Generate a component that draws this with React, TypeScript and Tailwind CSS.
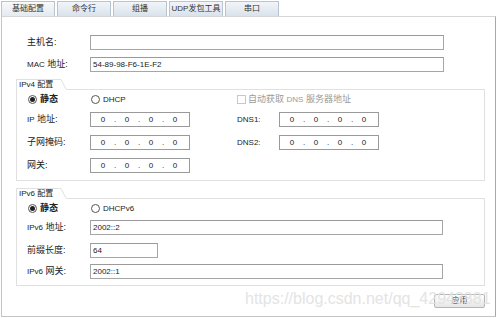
import React from 'react';

const TABS = ['基础配置', '命令行', '组播', 'UDP发包工具', '串口'];

function TextInput({ value = '', w }: { value?: string; w: string }) {
  return (
    <div className={`${w} h-[15px] border border-[#a6a6a6] border-t-[#9a9a9a] bg-white flex items-center pl-[2px] text-[8px] text-[#222]`}>
      {value}
    </div>
  );
}

function IpInput() {
  return (
    <div className="w-[100px] h-[15px] border border-[#9a9a9a] bg-white flex items-center text-[8px] text-[#222]">
      {[0, 1, 2, 3].map((i) => (
        <React.Fragment key={i}>
          {i > 0 && <span className="w-0 flex justify-center">.</span>}
          <span className="w-[24px] text-center">0</span>
        </React.Fragment>
      ))}
    </div>
  );
}

function Radio({ checked, label }: { checked?: boolean; label: string }) {
  return (
    <div className="flex items-center gap-[3px]">
      <span className="w-[9px] h-[9px] rounded-full border border-[#555] bg-white flex items-center justify-center">
        {checked && <span className="w-[5px] h-[5px] rounded-full bg-[#222]" />}
      </span>
      <span className={label.startsWith('DHCP') ? 'text-[8px]' : 'text-[9px] font-semibold'}>{label}</span>
    </div>
  );
}

function GroupTab({ title }: { title: string }) {
  return (
    <div className="flex h-[11px]">
      <div className="border-l border-t border-[#e0e0e0] pl-[2px] pr-[8px] text-[8px] leading-[10px] text-[#222] bg-white">
        {title}
      </div>
      <svg width="6" height="11" className="block">
        <line x1="0" y1="0.5" x2="5.5" y2="11" stroke="#e0e0e0" strokeWidth="1" />
      </svg>
      <div className="flex-1 border-b border-[#e0e0e0]" />
    </div>
  );
}

function Label({ children, w = 'w-[63px]' }: { children: React.ReactNode; w?: string }) {
  return <div className={`${w} text-[9px] text-[#222] shrink-0`}>{children}</div>;
}

export default function App() {
  return (
    <div
      className="w-[496px] h-[318px] bg-white relative overflow-hidden text-[#222]"
      style={{ fontFamily: '"Liberation Sans","Noto Sans CJK SC",sans-serif' }}
    >
      {/* tabs */}
      <div className="flex h-[16px] pl-[1px] gap-[2px] items-end">
        {TABS.map((t, i) => (
          <div
            key={t}
            className={`w-[54px] h-[15px] border border-b-0 border-[#b8c4d0] flex items-center justify-center text-[8px] text-[#333] ${
              i === 0 ? 'bg-gradient-to-b from-[#f7f9fb] to-[#e4eaf0]' : 'bg-gradient-to-b from-[#f1f5f9] to-[#d9e2eb]'
            }`}
          >
            {t}
          </div>
        ))}
      </div>

      {/* panel */}
      <div className="ml-[1px] w-[495px] h-[301px] border border-[#c4c4c4] border-t-[#d6d6d6] border-r-[#a8a8a8] pl-[14px] pr-[10px] pt-[18px]">
        <div className="pl-[11px] flex items-center">
          <Label>主机名:</Label>
          <TextInput w="w-[354px]" />
        </div>
        <div className="pl-[11px] flex items-center mt-[7px]">
          <Label>
            <span className="text-[8px]">MAC</span> 地址:
          </Label>
          <TextInput w="w-[354px]" value="54-89-98-F6-1E-F2" />
        </div>

        {/* IPv4 */}
        <div className="mt-[7px]">
          <GroupTab title="IPv4 配置" />
          <div className="border-l border-r border-b border-[#e0e0e0] pl-[10px] pt-[4px] pb-[7px]">
            <div className="flex items-center h-[11px]">
              <div className="w-[63px] pl-[1px]">
                <Radio checked label="静态" />
              </div>
              <div className="w-[147px] pl-[1px]">
                <Radio label="DHCP" />
              </div>
              <div className="flex items-center gap-[2px] text-[9px] text-[#9a9a9a]">
                <span className="w-[9px] h-[9px] border border-[#c8c8c8] bg-white" />
                <span>
                  自动获取 <span className="text-[8px]">DNS</span> 服务器地址
                </span>
              </div>
            </div>
            <div className="flex items-center mt-[7px]">
              <Label>
                <span className="text-[8px]">IP</span> 地址:
              </Label>
              <IpInput />
              <div className="w-[47px]" />
              <Label w="w-[42px]">
                <span className="text-[8px]">DNS1:</span>
              </Label>
              <IpInput />
            </div>
            <div className="flex items-center mt-[8px]">
              <Label>子网掩码:</Label>
              <IpInput />
              <div className="w-[47px]" />
              <Label w="w-[42px]">
                <span className="text-[8px]">DNS2:</span>
              </Label>
              <IpInput />
            </div>
            <div className="flex items-center mt-[8px]">
              <Label>网关:</Label>
              <IpInput />
            </div>
          </div>
        </div>

        {/* IPv6 */}
        <div className="mt-[7px]">
          <GroupTab title="IPv6 配置" />
          <div className="border-l border-r border-b border-[#e0e0e0] pl-[10px] pt-[4px] pb-[6px]">
            <div className="flex items-center h-[11px]">
              <div className="w-[63px] pl-[1px]">
                <Radio checked label="静态" />
              </div>
              <div className="pl-[1px]">
                <Radio label="DHCPv6" />
              </div>
            </div>
            <div className="flex items-center mt-[6px]">
              <Label>
                <span className="text-[8px]">IPv6</span> 地址:
              </Label>
              <TextInput w="w-[353px]" value="2002::2" />
            </div>
            <div className="flex items-center mt-[8px]">
              <Label>前缀长度:</Label>
              <TextInput w="w-[68px]" value="64" />
            </div>
            <div className="flex items-center mt-[6px]">
              <Label>
                <span className="text-[8px]">IPv6</span> 网关:
              </Label>
              <TextInput w="w-[353px]" value="2002::1" />
            </div>
          </div>
        </div>

        <div className="flex justify-end mt-[8px]">
          <div className="w-[51px] h-[14px] border border-[#b4b4b4] rounded-[2px] bg-gradient-to-b from-[#ffffff] to-[#e6e6e6] flex items-center justify-center text-[8px] text-[#333]">
            应用
          </div>
        </div>
      </div>

      {/* watermark */}
      <div className="absolute left-[245px] top-[289px] text-[16px] leading-[20px] text-[#e2e2e2] opacity-90 pointer-events-none whitespace-nowrap">
        https://blog.csdn.net/qq_42943881
      </div>
    </div>
  );
}
